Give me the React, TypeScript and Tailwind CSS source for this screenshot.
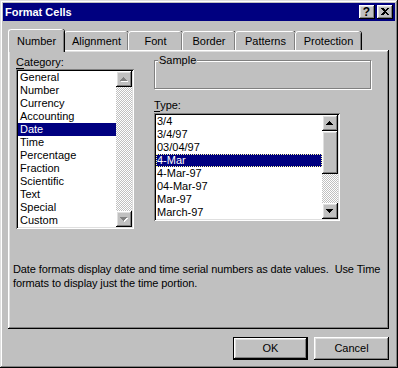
import React from "react"

// Win9x bevels
const RAISED =
  "shadow-[inset_-1px_-1px_#000,inset_1px_1px_#fff,inset_-2px_-2px_#808080,inset_2px_2px_#dfdfdf]"
const SUNKEN =
  "shadow-[inset_1px_1px_#808080,inset_-1px_-1px_#fff,inset_2px_2px_#000,inset_-2px_-2px_#dfdfdf]"
const DITHER =
  "bg-[image:repeating-conic-gradient(#fff_0%_25%,#c0c0c0_0%_50%)] bg-[length:2px_2px]"

const CATEGORIES = [
  "General",
  "Number",
  "Currency",
  "Accounting",
  "Date",
  "Time",
  "Percentage",
  "Fraction",
  "Scientific",
  "Text",
  "Special",
  "Custom",
]

const TYPES = ["3/4", "3/4/97", "03/04/97", "4-Mar", "4-Mar-97", "04-Mar-97", "Mar-97", "March-97"]

const TABS = [
  { label: "Number", width: "w-[56px]", active: true },
  { label: "Alignment", width: "w-[64px]" },
  { label: "Font", width: "w-[54px]" },
  { label: "Border", width: "w-[53px]" },
  { label: "Patterns", width: "w-[60px]" },
  { label: "Protection", width: "w-[66px]" },
]

function Arrow({ dir, disabled }: { dir: "up" | "down"; disabled?: boolean }) {
  const rows = [
    [3, 1],
    [2, 3],
    [1, 5],
    [0, 7],
  ]
  const ordered = dir === "up" ? rows : [...rows].reverse()
  const shape = (fill: string, d: number) =>
    ordered.map(([x, w], i) => (
      <rect key={fill + i} x={x + d} y={i + d} width={w} height={1} fill={fill} />
    ))
  return (
    <svg width="8" height="5" shapeRendering="crispEdges">
      {disabled && shape("#fff", 1)}
      {shape(disabled ? "#808080" : "#000", 0)}
    </svg>
  )
}

function ScrollButton({ dir, disabled }: { dir: "up" | "down"; disabled?: boolean }) {
  return (
    <div className={`flex h-[16px] w-[16px] items-center justify-center bg-[#c0c0c0] ${RAISED}`}>
      <Arrow dir={dir} disabled={disabled} />
    </div>
  )
}

function Underlined({ first, rest }: { first: string; rest: string }) {
  return (
    <div className="h-[13px] leading-[13px]">
      <span className="underline underline-offset-[2px]">{first}</span>
      {rest}
    </div>
  )
}

export default function App() {
  return (
    <div
      className={`flex h-[368px] w-[398px] flex-col bg-[#c0c0c0] p-[3px] font-['Liberation_Sans',Arial,sans-serif] text-[11px] text-black ${"shadow-[inset_-1px_-1px_#000,inset_1px_1px_#dfdfdf,inset_-2px_-2px_#808080,inset_2px_2px_#fff]"}`}
    >
      {/* Title bar */}
      <div className="flex h-[18px] items-center bg-[#000080] pl-[2px] pr-[2px]">
        <span className="flex-1 text-[11px] font-bold leading-[18px] text-white">Format Cells</span>
        <div className={`flex h-[14px] w-[16px] items-center justify-center bg-[#c0c0c0] text-[12px] font-bold leading-none ${RAISED}`}>
          <span className="-mt-[1px] -ml-[1px]">?</span>
        </div>
        <div className={`ml-[2px] flex h-[14px] w-[16px] items-center justify-center bg-[#c0c0c0] ${RAISED}`}>
          <svg width="8" height="7" shapeRendering="crispEdges" className="-mt-[1px] -ml-[1px]">
            <path d="M0 0h2l2 2 2-2h2L5 3.5 8 7H6L4 5 2 7H0l3-3.5z" fill="#000" />
          </svg>
        </div>
      </div>

      {/* Tabs */}
      <div className="mt-[8px] flex h-[21px] items-end pl-[5px]">
        {TABS.map((t) => (
          <div
            key={t.label}
            className={`${t.width} rounded-t-[3px] border-l border-t border-white bg-[#c0c0c0] text-center leading-[13px] shadow-[inset_-1px_0_#808080,1px_0_#000] ${
              t.active ? "relative z-10 -mb-[2px] h-[23px] pt-[5px]" : "h-[19px] pt-[3px]"
            }`}
          >
            {t.label}
          </div>
        ))}
      </div>

      {/* Tab panel */}
      <div className={`ml-[5px] flex h-[279px] w-[381px] flex-col ${RAISED}`}>
        <div className="flex">
          {/* Category */}
          <div className="ml-[8px] mt-[6px] flex w-[118px] flex-col">
            <Underlined first="C" rest="ategory:" />
            <div className={`flex h-[160px] w-[118px] bg-white p-[2px] ${SUNKEN}`}>
              <div className="flex flex-1 flex-col">
                {CATEGORIES.map((c) => (
                  <div
                    key={c}
                    className={`h-[13px] pl-[2px] leading-[13px] ${c === "Date" ? "bg-[#000080] text-white" : ""}`}
                  >
                    {c}
                  </div>
                ))}
              </div>
              <div className="flex w-[16px] flex-col">
                <ScrollButton dir="up" disabled />
                <div className={`flex-1 ${DITHER}`} />
                <ScrollButton dir="down" disabled />
              </div>
            </div>
          </div>

          {/* Sample + Type */}
          <div className="ml-[20px] mt-[10px] flex flex-col">
            <div className="relative h-[29px] w-[217px] border border-[#808080] shadow-[inset_1px_1px_#fff,1px_1px_#fff]">
              <span className="absolute -top-[7px] left-[3px] bg-[#c0c0c0] px-[1px] leading-[13px]">Sample</span>
            </div>
            <div className="mt-[10px]">
              <Underlined first="T" rest="ype:" />
            </div>
            <div className={`mt-[1px] flex h-[108px] w-[186px] bg-white p-[2px] ${SUNKEN}`}>
              <div className="flex flex-1 flex-col">
                {TYPES.map((t) => (
                  <div
                    key={t}
                    className={`h-[13px] leading-[11px] ${
                      t === "4-Mar"
                        ? "border border-dotted border-[#ffffa0] bg-[#000080] text-white"
                        : "border border-transparent"
                    }`}
                  >
                    {t}
                  </div>
                ))}
              </div>
              <div className="flex w-[16px] flex-col">
                <ScrollButton dir="up" />
                <div className={`h-[43px] bg-[#c0c0c0] ${RAISED}`} />
                <div className={`flex-1 ${DITHER}`} />
                <ScrollButton dir="down" />
              </div>
            </div>
          </div>
        </div>

        <p className="ml-[5px] mt-[33px] whitespace-pre leading-[14px] tracking-[-0.1px]">
          {"Date formats display date and time serial numbers as date values.  Use Time"}
          <br />
          {"formats to display just the time portion."}
        </p>
      </div>

      {/* Buttons */}
      <div className="mt-[8px] flex justify-end gap-[6px] pr-[6px]">
        <button
          className={`h-[23px] w-[75px] bg-[#c0c0c0] leading-[13px] ${"shadow-[inset_0_0_0_1px_#000,inset_-2px_-2px_#000,inset_2px_2px_#fff,inset_-3px_-3px_#808080,inset_3px_3px_#dfdfdf]"}`}
        >
          OK
        </button>
        <button className={`h-[23px] w-[75px] bg-[#c0c0c0] leading-[13px] ${RAISED}`}>Cancel</button>
      </div>
    </div>
  )
}
